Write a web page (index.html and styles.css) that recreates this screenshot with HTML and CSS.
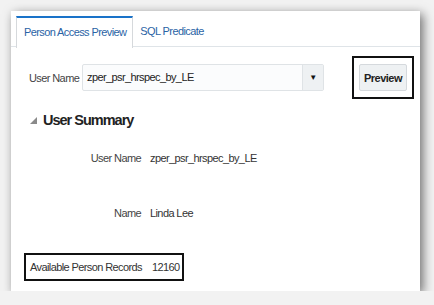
FILE: index.html
```html
<!DOCTYPE html>
<html lang="en">
<head>
    <meta charset="UTF-8">
    <title>Person Access Preview</title>
    <link rel="stylesheet" href="styles.css">
</head>
<body>

<div class="panel">
    <div class="tabs">
        <div class="tab active">Person Access Preview</div>
        <div class="tab">SQL Predicate</div>
    </div>

    <div class="search-row">
        <span class="label">User Name</span>
        <div class="select">
            <span class="select-text">zper_psr_hrspec_by_LE</span>
            <span class="select-btn">&#9660;</span>
        </div>
        <div class="callout">
            <button class="btn">Preview</button>
        </div>
    </div>

    <div class="section-head">
        <span class="disclose"></span>
        <h2>User Summary</h2>
    </div>

    <div class="field">
        <span class="field-label">User Name</span>
        <span class="field-value">zper_psr_hrspec_by_LE</span>
    </div>
    <div class="field field-name">
        <span class="field-label">Name</span>
        <span class="field-value">Linda Lee</span>
    </div>

    <div class="records">
        <span>Available Person Records</span>
        <span class="records-count">12160</span>
    </div>
</div>

</body>
</html>
```

FILE: styles.css
```css
body {
    margin: 0;
    background-color: #f2f2f2;
    font-family: "Liberation Sans", Arial, sans-serif;
    font-size: 11px;
    letter-spacing: -0.6px;
    color: #333;
    white-space: nowrap;
}
.panel {
    margin: 11px 0 0 11px;
    width: 409px;
    height: 280px;
    box-sizing: border-box;
    padding-top: 5px;
    background-color: #fff;
    box-shadow: 3px 3px 10px rgba(0, 0, 0, 0.55);
}
.tabs {
    display: flex;
    padding-left: 5px;
    border-bottom: 1px solid #dfe4e8;
    height: 30px;
}
.tab {
    padding: 0 6px 0 7px;
    line-height: 30px;
    color: #2a63a5;
}
.tab.active {
    border-top: 2px solid #1a73c9;
    border-left: 1px solid #d6d9dc;
    border-right: 1px solid #d6d9dc;
    background-color: #fff;
    line-height: 29px;
    height: 29px;
    margin-bottom: -1px;
    padding-bottom: 1px;
}
.search-row {
    display: flex;
    align-items: center;
    margin-top: 9px;
    padding-left: 18px;
}
.label {
    width: 53px;
    color: #444;
}
.select {
    display: flex;
    width: 242px;
    height: 27px;
    box-sizing: border-box;
    border: 1px solid #dfe3e6;
    border-radius: 2px;
    background-color: #fbfcfd;
}
.select-text {
    flex: 1;
    line-height: 25px;
    padding-left: 4px;
    color: #222;
}
.select-btn {
    width: 20px;
    border-left: 1px solid #dfe3e6;
    background-color: #eef1f3;
    text-align: center;
    line-height: 25px;
    font-size: 8px;
    color: #111;
}
.callout {
    margin-left: 28px;
    padding: 6px 5px;
    border: 2px solid #111;
}
.btn {
    display: block;
    width: 48px;
    height: 27px;
    padding: 0;
    border: 1px solid #d5d9dd;
    border-radius: 2px;
    background-color: #eef1f3;
    font-family: inherit;
    font-size: 11px;
    letter-spacing: -0.5px;
    font-weight: bold;
    color: #222;
}
.section-head {
    display: flex;
    align-items: center;
    margin-top: 13px;
    padding-left: 19px;
}
.disclose {
    width: 0;
    height: 0;
    border-left: 7px solid transparent;
    border-bottom: 7px solid #8a8a8a;
    margin-right: 6px;
}
h2 {
    margin: 0;
    font-size: 14.5px;
    letter-spacing: -1px;
    font-weight: bold;
    color: #222;
}
.field {
    display: flex;
    margin-top: 22px;
    line-height: 16px;
}
.field-name {
    margin-top: 39px;
}
.field-label {
    width: 130px;
    text-align: right;
    color: #444;
}
.field-value {
    margin-left: 9px;
    color: #333;
}
.records {
    display: inline-flex;
    gap: 10px;
    margin: 32px 0 0 13px;
    padding: 0 6px 0 4px;
    width: 160px;
    height: 28px;
    box-sizing: border-box;
    align-items: center;
    border: 2px solid #111;
    color: #333;
}
```
